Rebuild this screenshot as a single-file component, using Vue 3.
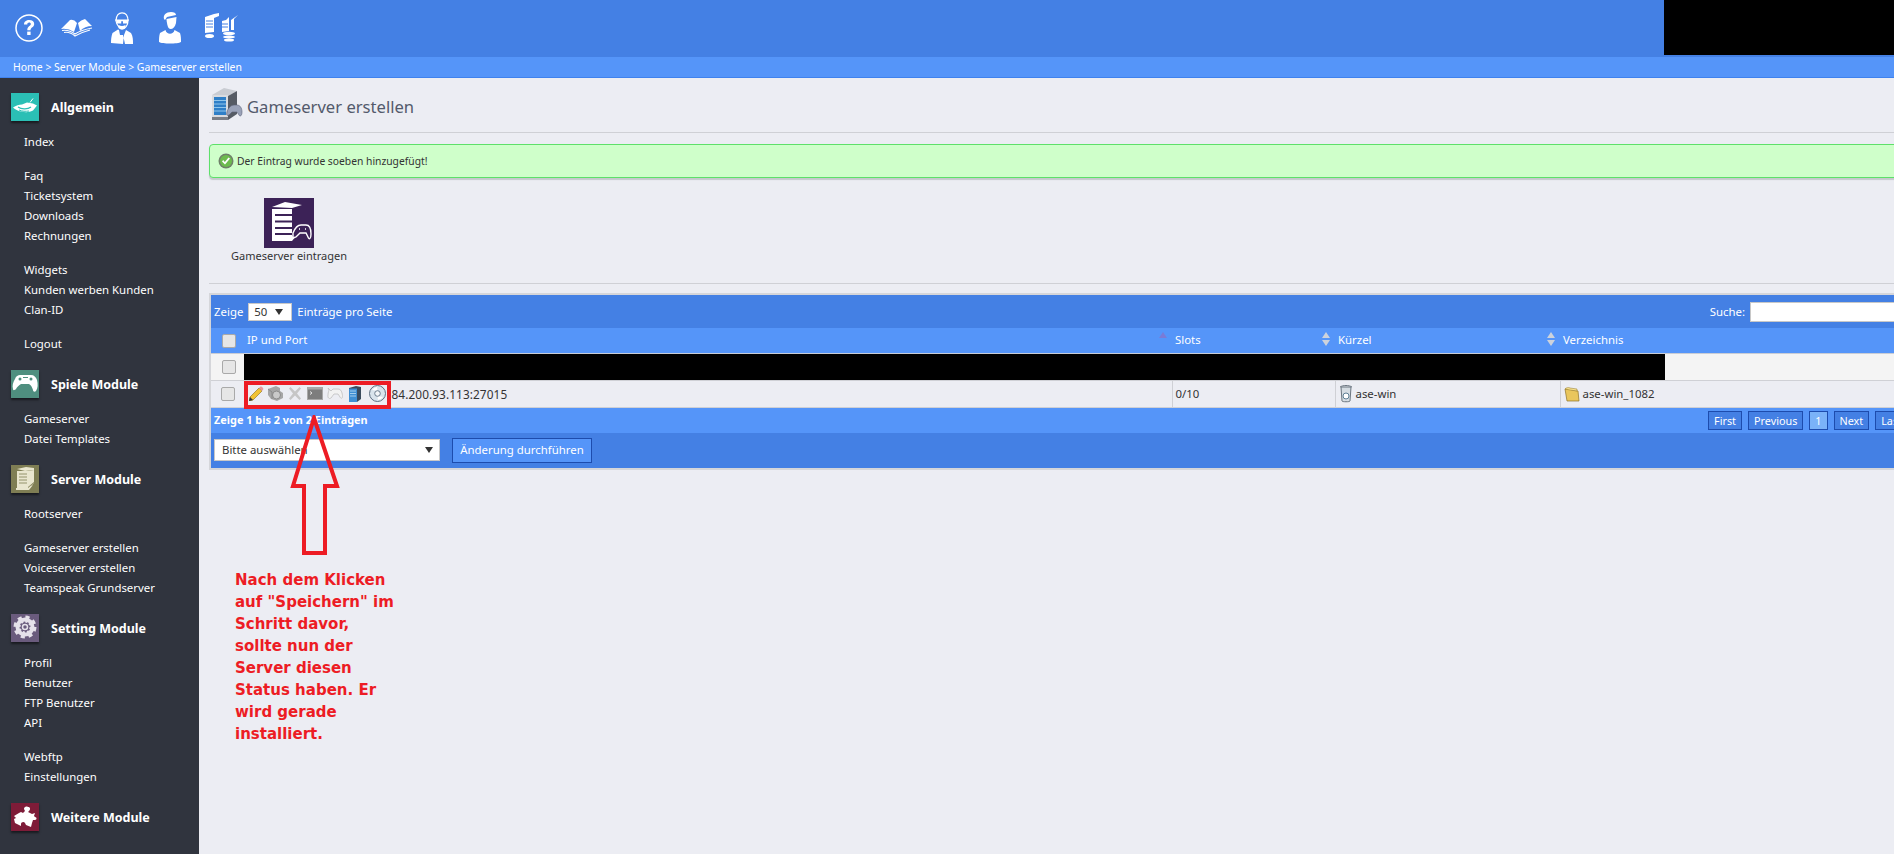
<script setup>
const sections = [
  { title: 'Allgemein', icon: 'hand', bg: '#2bbfb5', groups: [['Index'], ['Faq', 'Ticketsystem', 'Downloads', 'Rechnungen'], ['Widgets', 'Kunden werben Kunden', 'Clan-ID'], ['Logout']] },
  { title: 'Spiele Module', icon: 'pad', bg: '#4f8f7f', groups: [['Gameserver', 'Datei Templates']] },
  { title: 'Server Module', icon: 'tower', bg: '#7f7e54', groups: [['Rootserver'], ['Gameserver erstellen', 'Voiceserver erstellen', 'Teamspeak Grundserver']] },
  { title: 'Setting Module', icon: 'gear', bg: '#6a5b7d', groups: [['Profil', 'Benutzer', 'FTP Benutzer', 'API'], ['Webftp', 'Einstellungen']] },
  { title: 'Weitere Module', icon: 'puzzle', bg: '#7e1c38', groups: [] },
]
const pages = ['First', 'Previous', '1', 'Next', 'Last']
const note = ['Nach dem Klicken', 'auf "Speichern" im', 'Schritt davor,', 'sollte nun der', 'Server diesen', 'Status haben. Er', 'wird gerade', 'installiert.']
</script>

<template>
  <div class="page">
    <header class="top">
      <div class="top-icons">
        <svg width="30" height="30" viewBox="0 0 30 30"><circle cx="15" cy="15" r="13" fill="none" stroke="#fff" stroke-width="1.500"/><path d="M10 11.500c0-3 2.300-4.500 5.200-4.500 3 0 5 1.600 5 4 0 3.400-3.700 3.300-3.700 6.200h-3.200c0-4 3.500-4 3.500-6.100 0-1-.7-1.500-1.700-1.500-1.100 0-1.800.7-1.800 1.900z" fill="#fff"/><rect x="13.200" y="18.600" width="3.400" height="3.400" fill="#fff"/></svg>
        <svg width="32" height="18" viewBox="0 0 32 18"><path d="M0 10 9 1q4-1 7 3l-3 9Q7 9 0 10z" fill="#fff"/><path d="M17 4q3-3 7-4l7 7q-7 0-12 5z" fill="#fff"/><path d="M1 11.500q7-1 13 3.500 6-4 17-6M3 13.500q6-1 11 3.500 7-4 15-6" fill="none" stroke="#fff" stroke-width="1.100"/></svg>
        <svg width="22" height="32" viewBox="0 0 22 32"><path d="M5 9C5 3 8 .8 11 .8c4 0 6 3 6 8 0 5-3 8-6 8-2 0-5-3-6-8z" fill="none" stroke="#fff" stroke-width="1.200"/><path d="M4 7.500h14v1l-1 .2v2.800h-5V9.300h-1.800v2.200H5.500V8.700l-1.500-.2z" fill="#fff"/><path d="M7.500 13q3.500 2 7 0v3q-3.500 3-7 0z" fill="#fff"/><path d="M7 17.500 1.500 21C.3 24 0 28 0 31l12 1 1-9 2-5 5 3c2 3 2 7 2 11h-8l-2-9h-3l-1-5z" fill="#fff"/></svg>
        <svg width="22" height="32" viewBox="0 0 22 32"><path d="M5 7c-1-4 2-7 7-7 3 0 5 1 5 3l-9 2-2 3z" fill="#fff"/><path d="M7.500 7 17.500 5l-.5 6c-1 4-3 6-5.500 6S8 13 7.500 7z" fill="#fff"/><path d="M6.500 18 1 21c-1 3-1 6-1 9 3 2 19 2 22 0 0-3 0-6-1-9l-5.500-3c-1 5-8 5-9 0z" fill="#fff"/></svg>
        <svg width="33" height="29" viewBox="0 0 33 29"><path d="M0 4 9 1l5-1v3L9 5v14L0 20zM1 6h7M1 9h7M1 12h7" fill="#fff"/><path d="M1 8h7M1 11h7M1 14h7" stroke="#4480e4"/><ellipse cx="4.500" cy="23" rx="4.500" ry="2" fill="#fff"/><path d="m17 8 4-1 3-3v14l-7 1zM26 7l7-5-4 4v11h-3z" fill="#fff"/><path d="M17 11h6M17 14h6" stroke="#4480e4"/><ellipse cx="24" cy="20.500" rx="6" ry="1.700" fill="#fff"/><ellipse cx="24" cy="24" rx="6" ry="1.400" fill="#fff"/><ellipse cx="24" cy="27" rx="5" ry="1.500" fill="#fff"/></svg>
      </div>
      <div class="redact-top"></div>
    </header>
    <nav class="crumbs">Home &gt; Server Module &gt; Gameserver erstellen</nav>

    <div class="body">
      <aside class="side">
        <section v-for="s in sections" :key="s.title" class="sec">
          <h3 class="sec-head">
            <span class="sec-icon" :style="{ background: s.bg }">
              <svg width="28" height="28" viewBox="0 0 28 28">
                <g v-if="s.icon === 'hand'" fill="#fff"><path d="M2 14.500c3-2 6-3 9-3l5-2 6 1 4 2-4 5c-4 2-8 2-11 1-3 0-7-2-9-4z"/><path d="M7 14c3 2 9 3 13 0" fill="none" stroke="#2bbfb5" stroke-width="1.200"/><path d="M8 17c3 1.500 7 1.500 10 1" fill="none" stroke="#2bbfb5"/><path d="m19 9.500 3-4" stroke="#fff" fill="none" stroke-width="1"/></g>
                <g v-else-if="s.icon === 'pad'" fill="#fff"><path d="M9 5h11c3 0 5 2 6 5 1 4 1 8-1 11-1 1-3 1-3-1-1-3-2-5-4-6H10c-2 1-4 3-5 5-1 1-3 2-3 0-1-3 0-7 2-10 1-3 3-4 5-4z"/><circle cx="9" cy="9" r="1.500" fill="#4f8f7f"/><circle cx="20" cy="9" r="1.500" fill="#4f8f7f"/><path d="M12 7h5v1h-5z" fill="#4f8f7f"/></g>
                <g v-else-if="s.icon === 'tower'" fill="#e9e6cf"><path d="m6 4 9-2 8 1v2l-9 1z"/><path d="M6 6h11v17H6z"/><path d="M8 9h8M8 12h8M8 15h8M8 18h8" stroke="#7f7e54" stroke-width=".8"/><path d="m17 6 6-1v13l-6 6zM5 23h12l5-3-4 5H5z"/><path d="m17 23 6-5v-1l-6 5z" fill="#7f7e54"/></g>
                <g v-else-if="s.icon === 'gear'" fill="none" stroke="#e5e1ea"><circle cx="14" cy="13" r="7.500" stroke-width="4"/><circle cx="14" cy="13" r="8" stroke-width="7" stroke-dasharray="3.300 3"/><circle cx="14" cy="13" r="2.500" stroke-width="1.500"/></g>
                <g v-else fill="#fff"><path d="m3 13 5-3 2-1 2 1 2-2-1-2c0-2 2-3 4-2 2 0 3 2 1 4l-1 1 4 2 3-1-1 3 1 1c2 0 2 3 0 3h-2l-1 3-1 4-5-2-1-2c-1-2-4-1-4 1v2l-6-3-1-4 2-1z"/></g>
              </svg>
            </span>
            <span class="sec-title">{{ s.title }}</span>
          </h3>
          <ul v-for="(g, i) in s.groups" :key="i" class="links">
            <li v-for="l in g" :key="l">{{ l }}</li>
          </ul>
        </section>
      </aside>

      <main class="main">
        <div class="title-row">
          <svg width="34" height="34" viewBox="0 0 34 34">
            <path d="M2 7 14 0l13 3-9 5z" fill="#c9ccd2"/><path d="M2 7h16v25H2z" fill="#d9dbdf"/><path d="M4 9h12v18H4z" fill="#2f7fc7"/><path d="M4 12.500h12M4 16h12M4 19.500h12M4 23h12" stroke="#8fc6ec"/><path d="m18 8 9-5v23l-9 6z" fill="#565b64"/><path d="M2 29h16v3H2z" fill="#7a7e86"/>
            <path d="M17 24c1-4 4-7 7-7h3c3 0 5 3 5 7 0 4-2 5-3 3l-2-3h-5l-3 3c-2 1-3 0-2-3z" fill="#9aa2b8" stroke="#5b6277" stroke-width=".6"/>
          </svg>
          <h1>Gameserver erstellen</h1>
        </div>

        <div class="alert">
          <svg width="16" height="16" viewBox="0 0 16 16"><circle cx="8" cy="8" r="7.500" fill="#6f7f6a"/><circle cx="8" cy="8" r="6" fill="#6dbb4e"/><path d="m4 8.500 3 3 5-6-1.500-1-3.700 4.500L5.200 7z" fill="#fff"/></svg>
          <span>Der Eintrag wurde soeben hinzugefügt!</span>
        </div>

        <div class="tiles">
          <a class="tile">
            <span class="tile-icon">
              <svg width="50" height="50" viewBox="0 0 50 50">
                <path d="M8 9 21 4l17 3-10 3z" fill="#fff"/><path d="M8 11h20v30H8z" fill="#fff"/><path d="M11 17h17M11 23.500h17M11 30h17M11 36h17" stroke="#3c2257" stroke-width="2"/><path d="M8 40h19l9-11 2 2-10 12H8z" fill="#fff"/>
                <path d="M29 35c2-5 5-8 8-8h5c3 0 5 3 5 9 0 5-2 6-3 3l-2-4h-6l-4 4-3 1z" fill="#3c2257" stroke="#fff" stroke-width="1.400"/><path d="M35 31h1M41 31h1" stroke="#fff" stroke-width="1.500"/>
              </svg>
            </span>
            <span class="tile-label">Gameserver eintragen</span>
          </a>
        </div>

        <div class="dt">
          <div class="dt-top">
            <label class="len">Zeige <span class="sel sel-len">50<i></i></span> Einträge pro Seite</label>
            <label class="search">Suche: <span class="search-box"></span></label>
          </div>
          <table>
            <colgroup><col class="c0"><col class="c1"><col class="c2"><col class="c3"><col></colgroup>
            <thead>
              <tr>
                <th><span class="cb cb-head"></span></th>
                <th>IP und Port<span class="sort"><b class="up active"></b></span></th>
                <th>Slots<span class="sort"><b class="up"></b><b class="down"></b></span></th>
                <th>Kürzel<span class="sort"><b class="up"></b><b class="down"></b></span></th>
                <th>Verzeichnis<span class="sort"><b class="up"></b><b class="down"></b></span></th>
              </tr>
            </thead>
            <tbody>
              <tr class="r1">
                <td><span class="cb"></span></td><td colspan="4" class="hidden-cell"><div class="redact-row"></div></td>
              </tr>
              <tr class="r2">
                <td><span class="cb"></span></td>
                <td>
                  <div class="actions">
                    <svg width="15" height="15" viewBox="0 0 15 15"><path d="M0 15l1-4L10 2l3 3-9 9z" fill="#f1c232" stroke="#8a6d1a" stroke-width=".6"/><path d="m10 2 1.500-1.500c1-.5 2.500 1 3 2.500L13 5z" fill="#e89aa0"/><path d="m0 15 1-4 3 3z" fill="#333"/></svg>
                    <svg width="16" height="15" viewBox="0 0 16 15"><path d="M1 3l8-3 4 2v3l3 2v5l-6 3-6-2-3-4z" fill="#a6a6a6"/><circle cx="9.500" cy="9" r="4" fill="#c9c9c9" stroke="#8a8a8a"/><path d="M1 3l4 3v7" stroke="#8a8a8a" fill="none"/></svg>
                    <svg width="12" height="13" viewBox="0 0 12 13"><path d="M1.500 0 6 4.500 10.500 0 12 1.500 8 6.500l4 5-1.500 1.500L6 8.500 1.500 13 0 11.500l4-5-4-5z" fill="#c6c6c6"/></svg>
                    <svg width="16" height="13" viewBox="0 0 16 13"><rect width="16" height="13" fill="#a8a8a8"/><rect x="1" y="2.500" width="14" height="9.500" fill="#7d7d7d"/><path d="m3 4.500 2 1.500-2 1.500" stroke="#e4e4e4" fill="none"/></svg>
                    <svg width="16" height="13" viewBox="0 0 16 13"><path d="M1 1l3 3 2-2h5c3 0 4 3 4.500 6.500C15.500 12 14 12 13 10l-2-3H7l-3 4c-2 1.500-3.500-.5-3-3 0-3 1-4 1-5z" fill="#f2f2f2" stroke="#bfbfbf" stroke-width=".8"/></svg>
                    <svg width="12" height="16" viewBox="0 0 12 16"><path d="M0 2l7-2 5 1v12l-4 3H0z" fill="#3a4a5c"/><path d="M0 2.500h8V16H0z" fill="#3f8fd4"/><path d="M1 5h6M1 7.500h6M1 10h6" stroke="#bfe0f5" stroke-width=".8"/></svg>
                    <svg width="17" height="17" viewBox="0 0 17 17"><circle cx="8.500" cy="8.500" r="8" fill="#d9e4ec" stroke="#5e6f80"/><path d="M3 5a7 7 0 0 1 5-3l.5 4zM14 12a7 7 0 0 1-5 3l-.5-4z" fill="#fff"/><circle cx="8.500" cy="8.500" r="2.800" fill="#f4f7f9" stroke="#6c7d8e"/></svg>
                  </div>
                  <span class="ip">84.200.93.113:27015</span>
                </td>
                <td>0/10</td>
                <td>
                  <span class="with-icon">
                    <svg width="14" height="18" viewBox="0 0 14 18"><path d="M2 2h10l-1 14c0 1-8 1-8 0z" fill="#d6dde3" stroke="#6b7680"/><path d="M1 2c3-2 9-2 12 0" stroke="#6b7680" fill="none"/><circle cx="7" cy="11" r="3" fill="#fff" stroke="#5e7f95"/></svg>
                    ase-win
                  </span>
                </td>
                <td>
                  <span class="with-icon">
                    <svg width="16" height="16" viewBox="0 0 16 16"><path d="M1 3h5l2 1 6 1 1 10H3z" fill="#e9c65d" stroke="#8f7326" stroke-width=".7"/><path d="M1 3c0-1 4-2 5-1l7 1v2l-7-1z" fill="#f7e28e" stroke="#8f7326" stroke-width=".5"/></svg>
                    ase-win_1082
                  </span>
                </td>
              </tr>
            </tbody>
          </table>
          <div class="dt-info">
            <span>Zeige 1 bis 2 von 2 Einträgen</span>
            <div class="pager"><a v-for="p in pages" :key="p" :class="{ cur: p === '1' }">{{ p }}</a></div>
          </div>
          <div class="dt-bulk">
            <span class="sel sel-bulk">Bitte auswählen<i></i></span>
            <button class="apply" type="button">Änderung durchführen</button>
          </div>
        </div>

        <div class="highlight"></div>
        <svg class="arrow" width="60" height="150" viewBox="0 0 60 150">
          <path d="M29 3 8 71H19V138H40V71H52Z" fill="none" stroke="#ed1c24" stroke-width="4"/>
        </svg>
        <p class="note"><span v-for="n in note" :key="n">{{ n }}</span></p>
      </main>
    </div>
  </div>
</template>

<style>
html, body { margin: 0; height: 100%; overflow: hidden; background: #ecedf3; }
</style>

<style scoped>
.page { width: 1894px; height: 854px; overflow: hidden; font: 11.400px/16px Tahoma, "Noto Sans", sans-serif; color: #333; display: flex; flex-direction: column; }
.top { height: 57px; flex: none; background: #4480e4; display: flex; justify-content: space-between; align-items: flex-start; }
.top-icons { display: flex; align-items: center; height: 55px; padding-left: 14px; gap: 18px; }
.top-icons svg:nth-child(2) { margin-left: -1px; }
.top-icons svg:nth-child(4) { margin-left: 8px; }
.top-icons svg:nth-child(5) { margin-left: 6px; }
.redact-top { width: 230px; height: 55px; background: #000; }
.crumbs { height: 21px; flex: none; box-sizing: border-box; background: #5595f9; border-bottom: 1px solid #3f82ee; color: #fff; padding-left: 13px; font-size: 10.450px; line-height: 20px; }
.body { flex: 1; display: flex; min-height: 0; }
.side { width: 199px; flex: none; background: #30343e; box-sizing: border-box; padding-top: 15px; color: #fff; }
.sec { margin-bottom: 16px; }
.sec-head { margin: 0 0 11px; display: flex; align-items: center; gap: 12px; padding-left: 11px; height: 28px; font-size: 12.500px; font-weight: 700; color: #fff; }
.sec-title { padding-top: 2px; }
.sec-icon { width: 28px; height: 28px; box-shadow: 0 2px 2px rgba(0,0,0,.5); display: block; }
.sec-icon svg { display: block; }
.links { list-style: none; margin: 0 0 14px; padding: 0 0 0 24px; }
.links:last-child { margin-bottom: 0; }
.links li { height: 20px; line-height: 20px; }
.main { flex: 1; min-width: 0; position: relative; background: #ecedf3; padding: 0 0 0 10px; overflow: hidden; }
.title-row { display: flex; align-items: center; gap: 3px; height: 55px; margin-right: -10px; border-bottom: 1px solid #cfd0d5; box-sizing: border-box; }
.title-row svg { margin: 0 0 0 1px; }
.title-row h1 { margin: 0; padding-top: 4px; font-size: 16.600px; font-weight: 400; color: #535a6b; }
.alert { margin-top: 11px; width: 1720px; height: 34px; box-sizing: border-box; background: #cfffca; border: 1px solid #5ee06a; border-radius: 4px; box-shadow: 0 2px 1px #c6c8cc; display: flex; align-items: center; gap: 3px; padding-left: 8px; font-size: 10.300px; }
.alert svg { flex: none; }
.tiles { height: 106px; border-bottom: 1px solid #cfd0d5; margin-right: -10px; box-sizing: border-box; padding-top: 20px; }
.tile { display: inline-flex; flex-direction: column; align-items: center; width: 180px; margin-left: -10px; }
.tile-icon { width: 50px; height: 50px; background: #3c2257; display: block; }
.tile-icon svg { display: block; }
.tile-label { font-size: 11px; line-height: 16px; color: #333; }
.dt { margin-top: 9px; width: 1720px; box-sizing: border-box; border: 2px solid #d5d6da; color: #fff; background: #4480e4; }
.dt-top { height: 33px; display: flex; justify-content: space-between; align-items: center; padding: 0 3px; }
.len { display: flex; align-items: center; gap: 5px; }
.sel { background: #fff; color: #333; border: 1px solid #c8c8c8; box-sizing: border-box; display: inline-flex; align-items: center; position: relative; }
.sel i { position: absolute; right: 8px; top: 50%; margin-top: -3px; border: 4px solid transparent; border-top: 6px solid #333; border-bottom: 0; }
.sel-len { width: 44px; height: 18px; padding-left: 5px; }
.search { display: flex; align-items: center; gap: 5px; margin-right: 1px; position: relative; left: -1px; }
.search-box { width: 172px; height: 20px; background: #fff; border: 1px solid #c8c8c8; box-sizing: border-box; display: block; }
table { width: 100%; border-collapse: collapse; table-layout: fixed; }
.c0 { width: 33px; }
.c1 { width: 928px; }
.c2 { width: 163px; }
.c3 { width: 225px; }
th { height: 25px; padding: 0 3px; background: #5595f9; font-weight: 400; text-align: left; color: #fff; position: relative; border-bottom: 1px solid #c9cdd6; box-sizing: border-box; }
th:first-child, td:first-child { text-align: center; padding: 0 0 0 2px; }
th:first-child { border-bottom: 1px solid #c9cdd6; }
td { height: 27px; padding: 0 3px; color: #333; border-bottom: 1px solid #cfd0d5; border-left: 1px solid #cfd0d5; box-sizing: border-box; vertical-align: middle; }
td:first-child { border-left: 0; }
.hidden-cell { padding: 0; border-left: 0; }
.redact-row { width: 1421px; height: 26px; background: #000; }
.r1 td { background: #f4f4f4; }
.r2 td { background: #ecedf3; }
.cb { display: inline-block; width: 12px; height: 12px; background: #e6e6e6; border: 1px solid #a9a9a9; border-radius: 2px; vertical-align: middle; }
.cb-head { background: #e6e6e6; }
.sort { position: absolute; right: 5px; top: 4px; display: flex; flex-direction: column; gap: 2px; }
.sort b { width: 0; height: 0; border-left: 4px solid transparent; border-right: 4px solid transparent; }
.sort .up { border-bottom: 6px solid #ccd2dc; }
.sort .down { border-top: 6px solid #ccd2dc; }
.sort .active { border-bottom-color: #7a7bd6; }
.actions { display: inline-flex; align-items: center; gap: 3px; vertical-align: middle; margin-left: 1px; }
.actions svg:nth-child(3), .actions svg:nth-child(4), .actions svg:nth-child(6) { margin-left: 3px; }
.actions svg:nth-child(5) { margin-left: 1px; }
.actions svg:nth-child(7) { margin-left: 5px; }
.ip { margin-left: 6px; vertical-align: middle; font-size: 11.800px; letter-spacing: .1px; }
.with-icon { display: inline-flex; align-items: center; gap: 3px; vertical-align: middle; }
.dt-info { height: 25px; background: #5595f9; display: flex; justify-content: space-between; align-items: center; padding: 0 3px; font-size: 10.900px; font-weight: 700; }
.pager { display: flex; gap: 6px; margin-right: 16px; font-weight: 400; }
.pager a { height: 19px; line-height: 17px; padding: 0 5px; box-sizing: border-box; background: #4480e4; border: 1px solid #1d4cad; color: #fff; font-size: 10.800px; }
.pager .cur { background: #7ab2f8; }
.dt-bulk { height: 35px; display: flex; align-items: center; gap: 12px; padding-left: 3px; }
.sel-bulk { width: 226px; height: 22px; padding-left: 7px; }
.sel-bulk i { right: 6px; }
.apply { width: 140px; height: 25px; padding: 0; background: #5595f9; color: #fff; border: 1px solid #1d4cad; font: inherit; }
.highlight { position: absolute; left: 45px; top: 303px; width: 147px; height: 28px; box-sizing: border-box; border: 4px solid #ed1c24; }
.arrow { position: absolute; left: 86px; top: 337px; }
.note { position: absolute; left: 36px; top: 491px; margin: 0; display: flex; flex-direction: column; color: #ed1c24; font: 700 15px/22px "DejaVu Sans", sans-serif; }
</style>
